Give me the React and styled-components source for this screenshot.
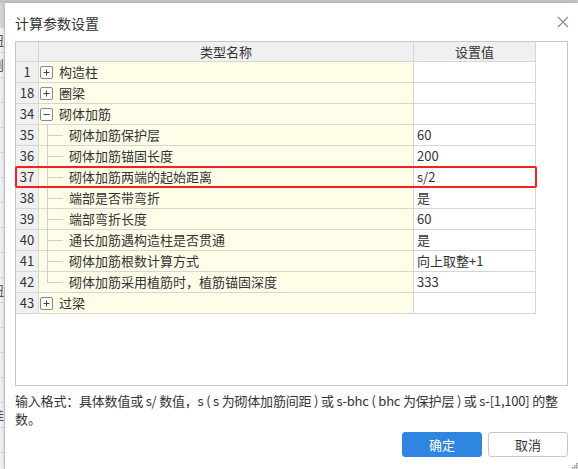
import React from 'react'
import styled, { createGlobalStyle, css } from 'styled-components'

const GlobalStyle = createGlobalStyle`
  html, body {
    margin: 0;
    padding: 0;
    width: 578px;
    height: 469px;
    overflow: hidden;
    background: #f2f2f2;
    font-family: "Noto Sans CJK SC", "Noto Sans", sans-serif;
    color: #333;
  }
`

const Page = styled.div`
  display: flex;
  width: 578px;
  height: 469px;
  border-top: 3px solid #c4c4c4;
  box-sizing: border-box;
`

const BackStrip = styled.div`
  width: 5px;
  flex: none;
  overflow: hidden;
  background: #f4f4f4;
  border-right: 1px solid #d0d0d0;
  box-sizing: border-box;
  display: flex;
  flex-direction: column;
`

const BackCell = styled.div`
  height: 24px;
  flex: none;
  border-bottom: 1px solid #dedede;
  font-size: 13px;
  line-height: 24px;
  text-indent: -9px;
  white-space: nowrap;
  color: #555;
  ${p => p.$dark && css`background: #d8d8d8;`}
`

const Dialog = styled.div`
  flex: 1;
  background: #fff;
  display: flex;
  flex-direction: column;
  padding: 0 10px 0 10px;
  box-shadow: -2px 0 4px rgba(0, 0, 0, 0.12);
  position: relative;
`

const TitleBar = styled.div`
  height: 38px;
  display: flex;
  align-items: center;
  justify-content: space-between;
`

const Title = styled.div`
  font-size: 14px;
  color: #333;
  padding-top: 1px;
`

const Close = styled.div`
  width: 14px;
  height: 14px;
  margin-right: -2px;
  display: flex;
  align-items: center;
  justify-content: center;
`

const GridBox = styled.div`
  height: 345px;
  border: 1px solid #c8c8c8;
  box-sizing: border-box;
  background: #fff;
`

const Table = styled.div`
  width: 520px;
  display: grid;
  grid-template-columns: 23px 375px 122px;
`

const HeadCell = styled.div`
  height: 19px;
  background: #f0f0f0;
  border-right: 1px solid #d6d6d6;
  border-bottom: 1px solid #d6d6d6;
  font-size: 13px;
  line-height: 19px;
  text-align: center;
  color: #333;
`

const Row = styled.div`
  display: contents;
`

const NumCell = styled.div`
  height: 20px;
  background: #f0f0f0;
  border-right: 1px solid #d6d6d6;
  border-bottom: 1px solid #d6d6d6;
  font-size: 13px;
  line-height: 20px;
  text-align: center;
  position: relative;
  ${p => p.$marked && css`
    &::after {
      content: '';
      position: absolute;
      left: -1px;
      top: -1px;
      width: 518px;
      height: 18px;
      border: 2px solid #f2231f;
      border-radius: 2px;
      z-index: 2;
    }
  `}
`

const NameCell = styled.div`
  height: 20px;
  background: #fffde8;
  border-right: 1px solid #d6d6d6;
  border-bottom: 1px solid #d6d6d6;
  font-size: 13px;
  line-height: 20px;
  display: flex;
  align-items: center;
  position: relative;
  padding-left: ${p => (p.$child ? '30px' : '1px')};
  white-space: nowrap;
`

const ValueCell = styled.div`
  height: 20px;
  border-right: 1px solid #d6d6d6;
  border-bottom: 1px solid #d6d6d6;
  font-size: 13px;
  line-height: 20px;
  padding-left: 3px;
  white-space: nowrap;
`

const Expander = styled.span`
  width: 11px;
  height: 11px;
  border: 1px solid #8a8a8a;
  border-radius: 2px;
  margin-right: 6px;
  display: inline-flex;
  align-items: center;
  justify-content: center;
  background: #fff;
  flex: none;
`

const TreeV = styled.span`
  position: absolute;
  left: 8px;
  top: -1px;
  width: 1px;
  height: ${p => (p.$last ? '11px' : '21px')};
  background: #cfcfcf;
`

const TreeH = styled.span`
  position: absolute;
  left: 8px;
  top: 10px;
  width: 16px;
  height: 1px;
  background: #cfcfcf;
`

const Hint = styled.div`
  margin-top: 6px;
  font-size: 13px;
  line-height: 18px;
  color: #333;
`

const HintLine = styled.div`
  white-space: nowrap;
  letter-spacing: ${p => p.$tight ? '-0.2px' : '0'};
`

const Buttons = styled.div`
  display: flex;
  justify-content: flex-end;
  gap: 6px;
  margin-top: 4px;
`

const Button = styled.div`
  width: 80px;
  height: 25px;
  box-sizing: border-box;
  border-radius: 3px;
  font-size: 13px;
  line-height: 23px;
  text-align: center;
  ${p => p.$primary
    ? css`background: #2f86e0; border: 1px solid #2f86e0; color: #fff;`
    : css`background: #fff; border: 1px solid #c8c8c8; color: #333;`}
`

const Grip = styled.svg`
  position: absolute;
  right: 0;
  bottom: 0;
`

const rows = [
  { n: 1, name: '构造柱', group: '+' },
  { n: 18, name: '圈梁', group: '+' },
  { n: 34, name: '砌体加筋', group: '-' },
  { n: 35, name: '砌体加筋保护层', value: '60' },
  { n: 36, name: '砌体加筋锚固长度', value: '200' },
  { n: 37, name: '砌体加筋两端的起始距离', value: 's/2', marked: true },
  { n: 38, name: '端部是否带弯折', value: '是' },
  { n: 39, name: '端部弯折长度', value: '60' },
  { n: 40, name: '通长加筋遇构造柱是否贯通', value: '是' },
  { n: 41, name: '砌体加筋根数计算方式', value: '向上取整+1' },
  { n: 42, name: '砌体加筋采用植筋时，植筋锚固深度', value: '333', last: true },
  { n: 43, name: '过梁', group: '+' },
]

const backCells = ['', '扭', '则', '', '', '', '', '', '', '', '', '扭', '', '', '', '', '挂', '', '']

function ExpandIcon({ kind }) {
  return (
    <svg width="9" height="9" viewBox="0 0 9 9">
      <line x1="1.5" y1="4.5" x2="7.5" y2="4.5" stroke="#444" strokeWidth="1" />
      {kind === '+' && <line x1="4.5" y1="1.5" x2="4.5" y2="7.5" stroke="#444" strokeWidth="1" />}
    </svg>
  )
}

export default function App() {
  return (
    <>
      <GlobalStyle />
      <Page>
        <BackStrip>
          {backCells.map((t, i) => (
            <BackCell key={i} $dark={i === 0}>{t}</BackCell>
          ))}
        </BackStrip>
        <Dialog>
          <TitleBar>
            <Title>计算参数设置</Title>
            <Close>
              <svg width="12" height="12" viewBox="0 0 12 12">
                <path d="M1 1L11 11M11 1L1 11" stroke="#8c8c8c" strokeWidth="1.2" />
              </svg>
            </Close>
          </TitleBar>
          <GridBox>
            <Table>
              <HeadCell />
              <HeadCell>类型名称</HeadCell>
              <HeadCell>设置值</HeadCell>
              {rows.map(r => (
                <Row key={r.n}>
                  <NumCell $marked={r.marked}>{r.n}</NumCell>
                  <NameCell $child={!r.group}>
                    {r.group ? (
                      <Expander><ExpandIcon kind={r.group} /></Expander>
                    ) : (
                      <>
                        <TreeV $last={r.last} />
                        <TreeH />
                      </>
                    )}
                    {r.name}
                  </NameCell>
                  <ValueCell>{r.value}</ValueCell>
                </Row>
              ))}
            </Table>
          </GridBox>
          <Hint>
            <HintLine $tight>输入格式：具体数值或 s/ 数值，s ( s 为砌体加筋间距 ) 或 s-bhc ( bhc 为保护层 ) 或 s-[1,100] 的整</HintLine>
            <HintLine>数。</HintLine>
          </Hint>
          <Buttons>
            <Button $primary>确定</Button>
            <Button>取消</Button>
          </Buttons>
          <Grip width="7" height="7" viewBox="0 0 7 7">
            <rect x="5" y="1" width="1.5" height="1.5" fill="#8a8a8a" />
            <rect x="3" y="3" width="1.5" height="1.5" fill="#8a8a8a" />
            <rect x="5" y="3" width="1.5" height="1.5" fill="#8a8a8a" />
            <rect x="1" y="5" width="1.5" height="1.5" fill="#8a8a8a" />
            <rect x="3" y="5" width="1.5" height="1.5" fill="#8a8a8a" />
            <rect x="5" y="5" width="1.5" height="1.5" fill="#8a8a8a" />
          </Grip>
        </Dialog>
      </Page>
    </>
  )
}
